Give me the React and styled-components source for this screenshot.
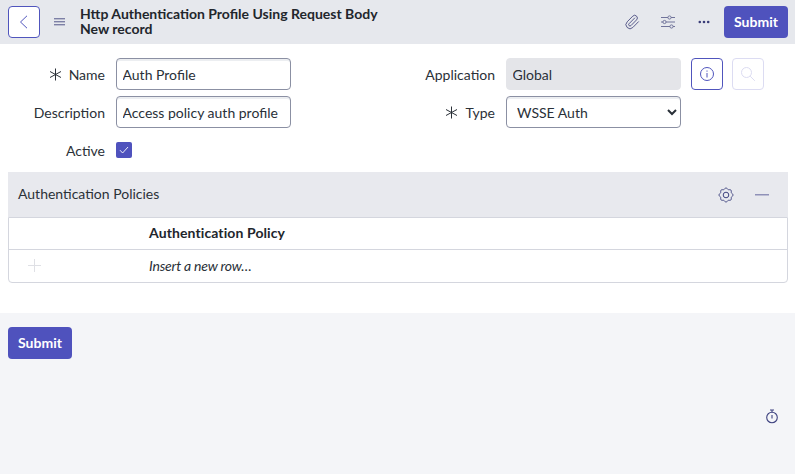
import React from "react";
import styled, { createGlobalStyle } from "styled-components";
import { Paperclip } from "lucide-react";

const Global = createGlobalStyle`
  html, body { margin: 0; padding: 0; height: 100%; background: #f4f5f8; }
  body { font-family: Lato, "Liberation Sans", sans-serif; color: #293038; font-size: 14px; }
  * { box-sizing: border-box; }
`;

const Page = styled.div`
  width: 795px;
  height: 474px;
  overflow: hidden;
  display: flex;
  flex-direction: column;
`;
const Header = styled.header`
  height: 44px;
  flex: none;
  background: #e6e8ed;
  display: flex;
  align-items: center;
  padding: 0 7px 0 8px;
`;
const BackButton = styled.button`
  width: 32px;
  height: 32px;
  padding: 0;
  display: flex;
  align-items: center;
  justify-content: center;
  background: #fff;
  border: 1px solid #5055bd;
  border-radius: 4px;
`;
const MenuIcon = styled.svg`
  width: 12px;
  height: 10px;
  margin: 0 14px;
  flex: none;
`;
const Title = styled.h1`
  margin: 0 0 2px;
  flex: 1;
  font-size: 14px;
  line-height: 15px;
  font-weight: 700;
  color: #22262c;
`;
const HeaderIcon = styled.span`
  width: 36px;
  height: 32px;
  display: flex;
  align-items: center;
  justify-content: center;
`;
const HeaderIcons = styled.div`
  display: flex;
  align-items: center;
  margin-right: 2px;
`;
const PrimaryButton = styled.button`
  width: 64px;
  height: 32px;
  padding: 0 0 2px;
  background: #4f52bd;
  border: 0;
  border-radius: 4px;
  color: #fff;
  font: 700 14px Lato, sans-serif;
`;
const Main = styled.main`
  background: #fff;
  height: 269px;
  flex: none;
  padding: 14px 7px 0 8px;
`;
const Form = styled.div`
  display: grid;
  grid-template-columns: 283px 1fr;
  height: 114px;
`;
const Column = styled.div`
  display: flex;
  flex-direction: column;
  gap: 6px;
`;
const Row = styled.div`
  display: flex;
  align-items: center;
  height: 32px;
`;
const Label = styled.label`
  width: ${p => p.$width}px;
  flex: none;
  display: flex;
  align-items: center;
  justify-content: flex-end;
  gap: 7px;
  margin-right: 11px;
  font-size: 14px;
  color: #2b3138;
`;
const TextInput = styled.input`
  width: 175px;
  height: 32px;
  padding: 0 5.5px;
  font: 14px Lato, sans-serif;
  color: #293038;
  background: ${p => (p.readOnly && p.$gray ? "#e4e5e9" : "#fff")};
  border: 1px solid ${p => (p.$gray ? "#e4e5e9" : "#8b90a3")};
  border-radius: 4px;
  box-shadow: ${p => (p.$gray ? "none" : "inset 0 2px 0 #eceef1")};
  outline: none;
`;
const Select = styled.select`
  width: 175px;
  height: 32px;
  padding: 0 6px;
  font: 14px Lato, sans-serif;
  color: #293038;
  background: #fff;
  border: 1px solid #8b90a3;
  border-radius: 4px;
  box-shadow: inset 0 2px 0 #eceef1;
`;
const Check = styled.span`
  width: 16px;
  height: 16px;
  background: #4f52bd;
  border-radius: 2px;
  display: flex;
  align-items: center;
  justify-content: center;
`;
const SquareButton = styled.button`
  width: 32px;
  height: 32px;
  padding: 0;
  margin-left: ${p => p.$gap}px;
  display: flex;
  align-items: center;
  justify-content: center;
  background: #fff;
  border: 1px solid ${p => (p.$faded ? "#dcdcf2" : "#5055bd")};
  border-radius: 4px;
`;
const SectionHeader = styled.div`
  height: 45px;
  width: 780px;
  background: #e8e9ee;
  display: flex;
  align-items: center;
  justify-content: space-between;
  padding: 0 19px 0 10px;
`;
const SectionTitle = styled.div`
  font-size: 14px;
  color: #2b3138;
  padding-bottom: 2px;
`;
const SectionIcons = styled.div`
  display: flex;
  align-items: center;
  gap: 21px;
`;
const Table = styled.div`
  width: 780px;
  height: 66px;
  border: 1px solid #d4d6de;
  border-radius: 0 0 4px 4px;
  background: #fff;
`;
const TableRow = styled.div`
  display: flex;
  align-items: center;
  height: ${p => p.$height}px;
  padding-bottom: 2px;
  border-bottom: ${p => (p.$line ? "1px solid #d4d6de" : "0")};
`;
const AddCell = styled.div`
  width: 140px;
  flex: none;
  display: flex;
  padding-left: 19px;
`;
const HeadCell = styled.div`
  font-size: 14px;
  font-weight: 700;
  letter-spacing: 0.1px;
  color: #22262c;
`;
const InsertCell = styled.div`
  font-size: 14px;
  font-style: italic;
  letter-spacing: -0.2px;
  color: #293038;
`;
const Footer = styled.footer`
  flex: 1;
  background: #f4f5f8;
  padding: 14px 8px 0;
  display: flex;
  flex-direction: column;
`;
const Timer = styled.svg`
  width: 14px;
  height: 15px;
  align-self: flex-end;
  margin: 50px 8px 0 0;
`;

const Star = () => (
  <svg width="13" height="13" viewBox="0 0 13 13" fill="none" stroke="#2b3138" strokeWidth="1">
    <path d="M6.5 .5v12M1 3.5l11 6M12 3.5l-11 6" />
  </svg>
);

const gearOutline = Array.from({ length: 96 }, (_, i) => {
  const a = (i / 96) * Math.PI * 2;
  const r = 6.4 + 0.55 * Math.cos(8 * a);
  return `${(8 + r * Math.sin(a)).toFixed(2)},${(8 - r * Math.cos(a)).toFixed(2)}`;
}).join(" ");

export default function App() {
  return (
    <Page>
      <Global />
      <Header>
        <BackButton aria-label="Back">
          <svg width="10" height="14" viewBox="0 0 10 14" fill="none" stroke="#5055bd" strokeWidth="1">
            <path d="M8 .8 1.5 7 8 13.2" />
          </svg>
        </BackButton>
        <MenuIcon viewBox="0 0 12 10" fill="#7d80a6">
          <rect y="1" width="11" height="1.4" />
          <rect y="4" width="11" height="1.4" />
          <rect y="7" width="11" height="1.4" />
        </MenuIcon>
        <Title>Http Authentication Profile Using Request Body<br />New record</Title>
        <HeaderIcons>
          <HeaderIcon>
            <Paperclip size={16} color="#43467c" strokeWidth={1.3} />
          </HeaderIcon>
          <HeaderIcon>
            <svg width="16" height="14" viewBox="0 0 16 14" fill="none" stroke="#71749b" strokeWidth="1">
              <path d="M1 2.5h7M11 2.5h4M1 7h2M6 7h9M1 11.5h9M13 11.5h2" />
              <circle cx="9.5" cy="2.5" r="1.6" />
              <circle cx="4.5" cy="7" r="1.6" />
              <circle cx="11.5" cy="11.5" r="1.6" />
            </svg>
          </HeaderIcon>
          <HeaderIcon>
            <svg width="12" height="4" viewBox="0 0 12 4" fill="#3a3d78">
              <circle cx="1.8" cy="2" r="1.3" />
              <circle cx="6" cy="2" r="1.3" />
              <circle cx="10.2" cy="2" r="1.3" />
            </svg>
          </HeaderIcon>
        </HeaderIcons>
        <PrimaryButton>Submit</PrimaryButton>
      </Header>
      <Main>
        <Form>
          <Column>
            <Row>
              <Label $width={97}><Star />Name</Label>
              <TextInput defaultValue="Auth Profile" />
            </Row>
            <Row>
              <Label $width={97}>Description</Label>
              <TextInput defaultValue="Access policy auth profile" />
            </Row>
            <Row>
              <Label $width={97}>Active</Label>
              <Check>
                <svg width="10" height="8" viewBox="0 0 10 8" fill="none" stroke="#fff" strokeWidth="0.9">
                  <path d="M1 4.2 3.6 7 9 1" />
                </svg>
              </Check>
            </Row>
          </Column>
          <Column>
            <Row>
              <Label $width={204}>Application</Label>
              <TextInput $gray readOnly defaultValue="Global" />
              <SquareButton $gap={10} aria-label="Info">
                <svg width="16" height="16" viewBox="0 0 16 16" fill="none" stroke="#5055bd" strokeWidth="1">
                  <circle cx="8" cy="8" r="6.5" />
                  <path d="M8 7v4.5M8 4.5v1.2" />
                </svg>
              </SquareButton>
              <SquareButton $gap={9} $faded aria-label="Search">
                <svg width="16" height="16" viewBox="0 0 16 16" fill="none" stroke="#dcdcf2" strokeWidth="1">
                  <circle cx="6.5" cy="6.5" r="5" />
                  <path d="m10.2 10.2 4.6 4.6" />
                </svg>
              </SquareButton>
            </Row>
            <Row>
              <Label $width={204}><Star />Type</Label>
              <Select defaultValue="WSSE Auth">
                <option>WSSE Auth</option>
              </Select>
            </Row>
          </Column>
        </Form>
        <SectionHeader>
          <SectionTitle>Authentication Policies</SectionTitle>
          <SectionIcons>
            <svg width="16" height="16" viewBox="0 0 16 16" fill="none" stroke="#3f4380" strokeWidth="1">
              <polygon points={gearOutline} />
              <circle cx="8" cy="8" r="2.8" />
            </svg>
            <svg width="14" height="2" viewBox="0 0 14 2" fill="#8f91b8">
              <rect width="14" height="1.5" />
            </svg>
          </SectionIcons>
        </SectionHeader>
        <Table>
          <TableRow $height={32} $line>
            <AddCell />
            <HeadCell>Authentication Policy</HeadCell>
          </TableRow>
          <TableRow $height={32}>
            <AddCell>
              <svg width="13" height="13" viewBox="0 0 13 13" stroke="#dfe0e5" strokeWidth="1">
                <path d="M6.5 0v13M0 6.5h13" />
              </svg>
            </AddCell>
            <InsertCell>Insert a new row…</InsertCell>
          </TableRow>
        </Table>
      </Main>
      <Footer>
        <PrimaryButton>Submit</PrimaryButton>
        <Timer viewBox="0 0 14 15" fill="none" stroke="#3f4380" strokeWidth="1.1">
          <circle cx="7" cy="8.5" r="5.3" />
          <path d="M5 1h4M7 1v2M7 6v3.5" />
        </Timer>
      </Footer>
    </Page>
  );
}
